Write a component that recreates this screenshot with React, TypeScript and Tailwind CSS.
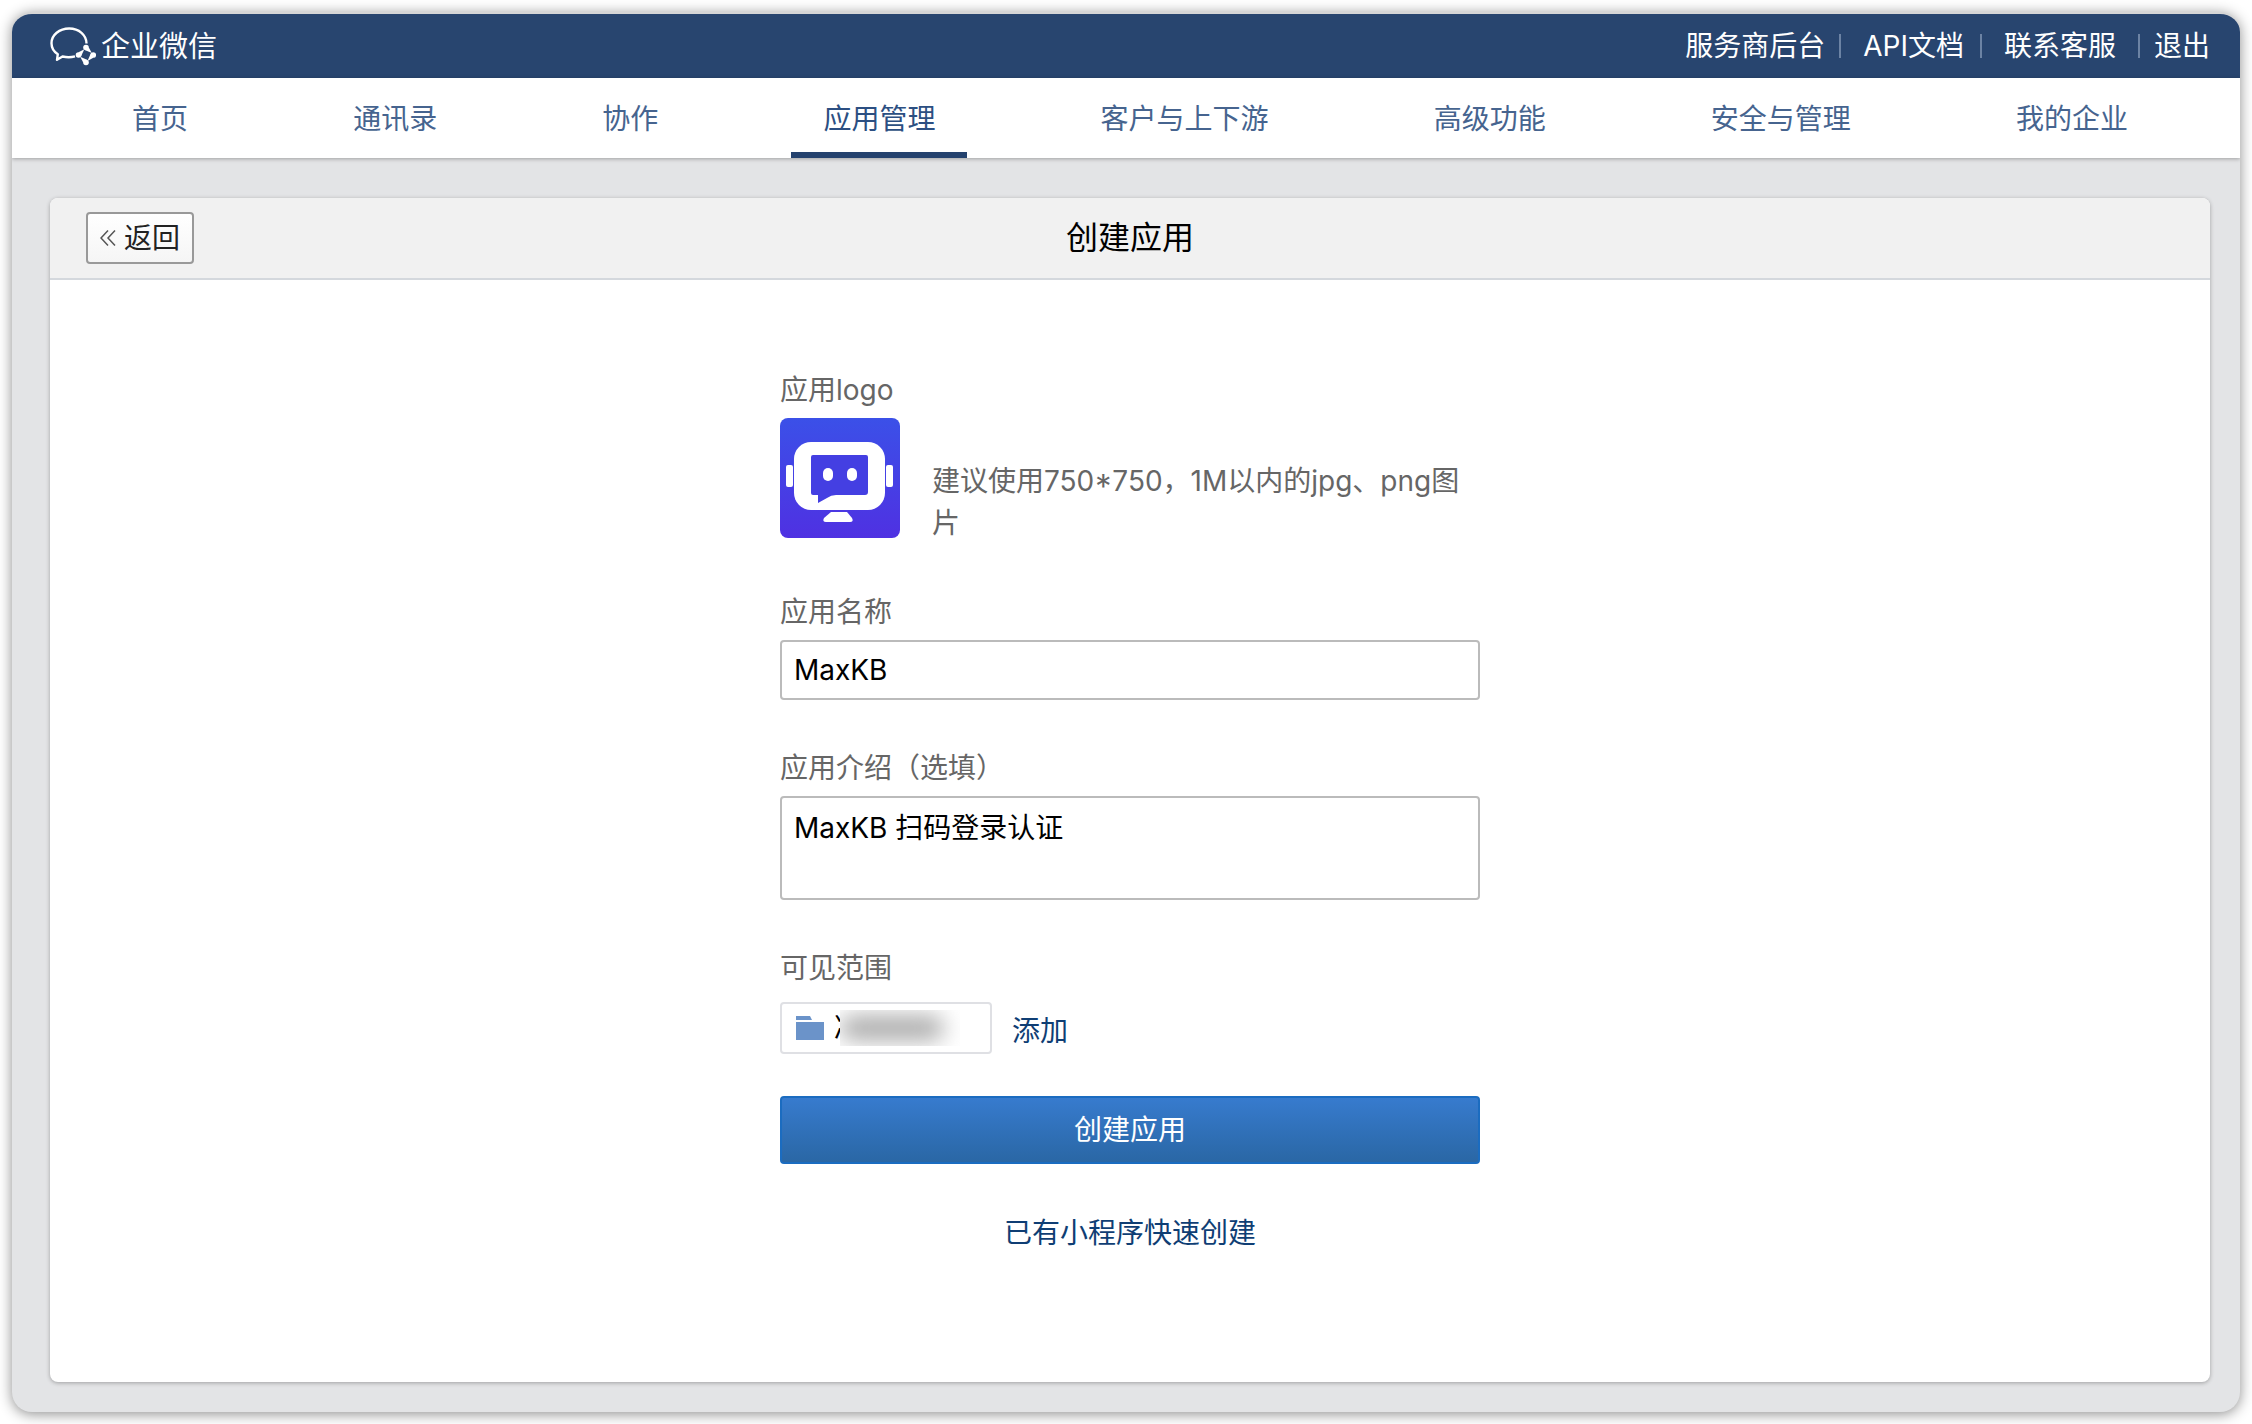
import { useState } from "react";

const navItems = [
  "首页",
  "通讯录",
  "协作",
  "应用管理",
  "客户与上下游",
  "高级功能",
  "安全与管理",
  "我的企业",
];

const BrandLogo = () => (
  <svg className="w-[46px] h-[40px]" viewBox="0 0 46 40" fill="none">
    <path
      d="M36.500 17.500C36.500 9 29 2.500 19.200 2.500S1.500 9 1.500 17.200c0 4.800 2.600 8.600 6.300 11L7 33.800l5.500-3.300c4 1 8.500 1 12.500-0.100"
      stroke="#fff"
      strokeWidth="2.400"
      strokeLinejoin="round"
    />
    <g fill="#fff">
      <circle cx="36" cy="21.500" r="2.800" />
      <circle cx="28.500" cy="29" r="2.800" />
      <circle cx="43.300" cy="29" r="2.800" />
      <circle cx="36" cy="36.500" r="2.800" />
      <path d="M38.800 21.500l3 5.500-7-3z" />
      <path d="M43.300 31.800l-5.800 3.200 3.300-7.500z" />
      <path d="M33.200 36.500l-3-5.800 7.300 3.300z" />
      <path d="M28.500 26.200l5.800-3-3.300 7.300z" />
    </g>
  </svg>
);

const AppLogo = () => (
  <svg
    className="w-[120px] h-[120px] rounded-lg shrink-0"
    viewBox="0 0 120 120"
    role="img"
    aria-label="MaxKB"
  >
    <defs>
      <linearGradient id="logoBg" x1="0" y1="0" x2="0" y2="1">
        <stop offset="0" stopColor="#3b50e8" />
        <stop offset="1" stopColor="#4f31e2" />
      </linearGradient>
    </defs>
    <rect width="120" height="120" fill="url(#logoBg)" />
    <rect x="6" y="47" width="7" height="22" rx="2" fill="#fff" />
    <rect x="106" y="47" width="7" height="22" rx="2" fill="#fff" />
    <rect x="14" y="24" width="91" height="68" rx="17" fill="#fff" />
    <path
      d="M33 37h53q2 0 2 2v35q0 3-3 3H56q-5 0-9 3l-9 5v-8h-5q-2 0-2-2V39q0-2 2-2z"
      fill="#443fe2"
    />
    <rect x="43" y="50" width="10" height="13" rx="5" fill="#fff" />
    <rect x="67" y="50" width="10" height="13" rx="5" fill="#fff" />
    <path d="M51 94h16l5 6q2 4-2 4H46q-4 0-2-4z" fill="#fff" />
  </svg>
);

const FolderIcon = () => (
  <svg className="w-7 h-6 shrink-0" viewBox="0 0 28 24" fill="#6b93c9">
    <path d="M0 0h14l2 4H0z" />
    <path d="M0 6h28v18H0z" />
  </svg>
);

const Divider = () => <span className="w-0.5 h-6 bg-[#6c83a4]" />;

const Header = () => (
  <header className="flex items-center justify-between h-16 pl-[38px] pr-[30px] bg-[#28456f] text-white">
    <div className="flex items-center gap-[5px]">
      <BrandLogo />
      <span className="text-[29px] leading-none">企业微信</span>
    </div>
    <div className="flex items-center">
      <a href="#" className="mr-3.5">
        服务商后台
      </a>
      <Divider />
      <a href="#" className="ml-[22px] mr-4">
        API文档
      </a>
      <Divider />
      <a href="#" className="mx-[22px]">
        联系客服
      </a>
      <Divider />
      <a href="#" className="ml-3.5">
        退出
      </a>
    </div>
  </header>
);

const Nav = () => (
  <nav className="relative flex justify-between h-20 pl-22 pr-20 bg-white text-[#46648f] shadow-[0_1px_4px_rgba(0,0,0,0.3)]">
    {navItems.map((item) => (
      <a
        key={item}
        href="#"
        className={
          item === "应用管理"
            ? "px-8 leading-[82px] text-[#2c4f82] border-b-6 border-[#24426e]"
            : "px-8 leading-[82px]"
        }
      >
        {item}
      </a>
    ))}
  </nav>
);

const App = () => {
  const [name, setName] = useState("MaxKB");
  const [intro, setIntro] = useState("MaxKB 扫码登录认证");

  return (
    <div className="min-h-screen flex p-3 bg-white text-[28px] leading-[42px] font-['Inter','Noto_Sans_CJK_SC',sans-serif]">
      <div className="flex-1 flex flex-col rounded-[20px] overflow-hidden border-t-2 border-[#d6d6d6] bg-[#e3e4e6] shadow-[0_2px_14px_rgba(0,0,0,0.45)]">
        <Header />
        <Nav />
        <main className="flex-1 flex flex-col mt-10 mb-[30px] ml-[38px] mr-[30px] rounded-lg overflow-hidden bg-white shadow-[0_1px_4px_rgba(0,0,0,0.3)]">
          <div className="grid grid-cols-3 items-center h-[82px] px-9 bg-[#f1f1f1] border-b-2 border-[#d4d8dd]">
            <button className="flex items-center justify-center gap-2 w-[108px] h-[52px] rounded border-2 border-[#999] bg-linear-to-b from-white to-[#f5f5f5] text-[#222]">
              <svg
                className="w-4 h-4"
                viewBox="0 0 16 16"
                fill="none"
                stroke="#555"
                strokeWidth="1.500"
              >
                <path d="M8 0.500L1 8l7 7.500M15 0.500L8 8l7 7.500" />
              </svg>
              返回
            </button>
            <h1 className="text-center text-[32px]">创建应用</h1>
          </div>

          <form
            className="w-[700px] mx-auto pt-[89px]"
            onSubmit={(e) => e.preventDefault()}
          >
            <p className="text-[#666]">应用logo</p>
            <div className="flex items-start gap-8 mt-[7px]">
              <AppLogo />
              <p className="w-[530px] pt-[42px] text-[#666]">
                建议使用750*750，1M以内的jpg、png图片
              </p>
            </div>

            <label htmlFor="app-name" className="block mt-[47px] text-[#666]">
              应用名称
            </label>
            <input
              id="app-name"
              className="block w-full h-[60px] mt-[7px] px-3 rounded border-2 border-[#bbb] text-black"
              value={name}
              onChange={(e) => setName(e.target.value)}
            />

            <label htmlFor="app-intro" className="block mt-[47px] text-[#666]">
              应用介绍（选填）
            </label>
            <textarea
              id="app-intro"
              className="block w-full h-[104px] mt-[7px] px-3 py-[9px] rounded border-2 border-[#bbb] text-black resize-none"
              value={intro}
              onChange={(e) => setIntro(e.target.value)}
            />

            <p className="mt-[47px] text-[#666]">可见范围</p>
            <div className="flex items-center gap-5 mt-[13px]">
              <div className="flex items-center gap-2.5 w-[212px] h-[52px] px-3.5 rounded border-2 border-[#dfe0e4]">
                <FolderIcon />
                <div className="relative w-[126px] h-9 overflow-hidden leading-9">
                  冷
                  <div className="absolute inset-y-0 left-1.5 right-0 overflow-hidden bg-white">
                    <div className="mt-1.5 w-[104px] h-6 rounded-full bg-[#a8a8a8] blur-[11px]" />
                  </div>
                </div>
              </div>
              <a href="#" className="pt-1.5 text-[#0f3e74]">
                添加
              </a>
            </div>

            <button
              type="submit"
              className="block w-full h-[68px] mt-[42px] rounded border-2 border-[#1b6cc0] bg-linear-to-b from-[#377bce] to-[#2a67a5] text-white"
            >
              创建应用
            </button>
            <a href="#" className="block mt-12 text-center text-[#0f3e74]">
              已有小程序快速创建
            </a>
          </form>
        </main>
      </div>
    </div>
  );
};

export default App;
